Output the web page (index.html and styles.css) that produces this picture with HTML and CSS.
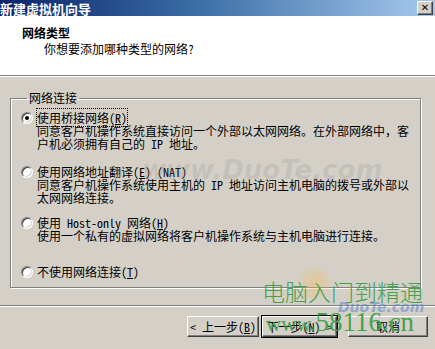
FILE: index.html
```html
<!DOCTYPE html>
<html lang="zh-CN">
<head>
<meta charset="UTF-8">
<title>新建虚拟机向导</title>
<link rel="stylesheet" href="styles.css">
</head>
<body>

<div class="window">
  <div class="titlebar">
    <span class="title">新建虚拟机向导</span>
    <button class="close">&#x2715;</button>
  </div>

  <div class="header">
    <div class="header-title">网络类型</div>
    <div class="header-sub">你想要添加哪种类型的网络?</div>
  </div>

  <fieldset class="group">
    <legend>网络连接</legend>

    <div class="option opt-bridge">
      <span class="radio checked"></span>
      <div class="option-text">
        <span class="focus">使用桥接网络(<u>R</u>)</span><br>
        同意客户机操作系统直接访问一个外部以太网网络。在外部网络中，客<br>
        户机必须拥有自己的 IP 地址。
      </div>
    </div>

    <div class="option opt-nat">
      <span class="radio"></span>
      <div class="option-text">
        使用网络地址翻译(<u>E</u>) (NAT)<br>
        同意客户机操作系统使用主机的 IP 地址访问主机电脑的拨号或外部以<br>
        太网网络连接。
      </div>
    </div>

    <div class="option opt-host">
      <span class="radio"></span>
      <div class="option-text">
        使用 Host-only 网络(<u>H</u>)<br>
        使用一个私有的虚拟网络将客户机操作系统与主机电脑进行连接。
      </div>
    </div>

    <div class="option opt-none">
      <span class="radio"></span>
      <div class="option-text">不使用网络连接(<u>T</u>)</div>
    </div>
  </fieldset>

  <div class="footer">
    <button class="btn btn-back">&lt; 上一步(<u>B</u>)</button>
    <button class="btn btn-next">下一步(<u>N</u>) &gt;</button>
    <button class="btn btn-cancel">取消</button>
  </div>

  <!-- watermarks baked into the screenshot -->
  <div class="wm wm-duote">www.DuoTe.com</div>
  <div class="wm wm-logo"></div>
  <div class="wm wm-green">电脑入门到精通</div>
  <div class="wm wm-duote2">DuoTe.com</div>
  <div class="wm wm-site"><span class="www">www.</span>58116.cn</div>
</div>

</body>
</html>
```

FILE: styles.css
```css
body {
  margin: 0;
  padding: 0;
  background-color: #d4d0c8;
  font-family: "Noto Sans Mono CJK SC", "Noto Sans CJK SC", sans-serif;
  font-size: 12px;
  color: #000;
}
.window {
  position: relative;
  width: 435px;
  height: 349px;
  overflow: hidden;
  background-color: #d4d0c8;
}
.titlebar {
  height: 16px;
  display: flex;
  align-items: center;
  justify-content: space-between;
  background: linear-gradient(to right, #0a246a 0%, #3a6ea5 45%, #a6caf0 100%);
}
.title {
  color: #fff;
  font-weight: 900;
  font-size: 13px;
  line-height: 15px;
}
.close {
  width: 16px;
  height: 14px;
  margin-right: 2px;
  padding: 0;
  font-size: 10px;
  line-height: 10px;
  font-weight: bold;
  font-family: "DejaVu Sans", sans-serif;
  background-color: #d4d0c8;
  border: 1px solid;
  border-color: #fff #404040 #404040 #fff;
  box-shadow: inset -1px -1px 0 #808080;
}
.header {
  height: 60px;
  background-color: #fff;
  border-bottom: 1px solid #808080;
  box-shadow: 0 1px 0 #fff;
  box-sizing: border-box;
  padding: 10px 0 0 22px;
}
.header-title {
  font-weight: bold;
  line-height: 14px;
}
.header-sub {
  margin-top: 2px;
  padding-left: 22px;
  line-height: 14px;
}
.group {
  margin: 15px 14px 0 10px;
  padding: 6px 0 9px 10px;
  border: 1px solid #808080;
  box-shadow: 1px 1px 0 #fff, inset 1px 1px 0 #fff;
  min-width: 0;
}
.group legend {
  padding: 0 2px;
  margin-left: 6px;
  line-height: 14px;
}
.option {
  display: flex;
  align-items: flex-start;
  line-height: 13px;
}
.opt-nat {
  margin-top: 15px;
}
.opt-host {
  margin-top: 12px;
}
.opt-none {
  margin-top: 23px;
}
.radio {
  flex: none;
  width: 12px;
  height: 12px;
  margin: 1px 4px 0 0;
  box-sizing: border-box;
  border-radius: 50%;
  background-color: #fff;
  border: 1px solid;
  border-color: #808080 #fff #fff #808080;
  box-shadow: inset 1px 1px 0 #404040, inset -1px -1px 0 #d4d0c8;
  position: relative;
}
.radio.checked::after {
  content: "";
  position: absolute;
  left: 3px;
  top: 3px;
  width: 4px;
  height: 4px;
  border-radius: 50%;
  background-color: #000;
}
.focus {
  outline: 1px dotted #000;
}
.footer {
  margin-top: 17px;
  border-top: 1px solid #808080;
  box-shadow: inset 0 1px 0 #fff;
  display: flex;
  justify-content: flex-end;
  padding: 10px 7px 0 0;
}
.btn {
  height: 21px;
  padding: 0;
  font-family: inherit;
  font-size: 12px;
  background-color: #d4d0c8;
  border: 1px solid;
  border-color: #fff #404040 #404040 #fff;
  box-shadow: inset -1px -1px 0 #808080;
  color: #000;
}
.btn-back {
  width: 72px;
}
.btn-next {
  width: 75px;
  margin-left: 3px;
  outline: 1px solid #000;
}
.btn-cancel {
  width: 80px;
  margin-left: 11px;
}
.wm {
  position: absolute;
  white-space: nowrap;
  pointer-events: none;
}
.wm-duote {
  left: 142px;
  top: 156px;
  font-family: "DejaVu Sans", sans-serif;
  font-style: italic;
  font-weight: bold;
  font-size: 26px;
  line-height: 28px;
  color: rgba(140, 140, 140, 0.22);
}
.wm-logo {
  left: 300px;
  top: 266px;
  width: 30px;
  height: 34px;
  border-radius: 50%;
  background: radial-gradient(circle, rgba(240, 190, 90, 0.45), rgba(240, 190, 90, 0));
}
.wm-green {
  left: 262px;
  top: 278px;
  font-family: "Noto Sans CJK SC", serif;
  font-weight: 300;
  font-size: 23px;
  line-height: 26px;
  color: #44a24c;
}
.wm-duote2 {
  left: 338px;
  top: 299px;
  font-family: "DejaVu Sans", sans-serif;
  font-style: italic;
  font-weight: bold;
  font-size: 14px;
  color: rgba(90, 130, 200, 0.55);
}
.wm-site {
  left: 266px;
  top: 306px;
  font-family: "Liberation Serif", serif;
  font-size: 27px;
  line-height: 32px;
  color: #44a24c;
}
.wm-site .www {
  font-size: 21px;
}
```
